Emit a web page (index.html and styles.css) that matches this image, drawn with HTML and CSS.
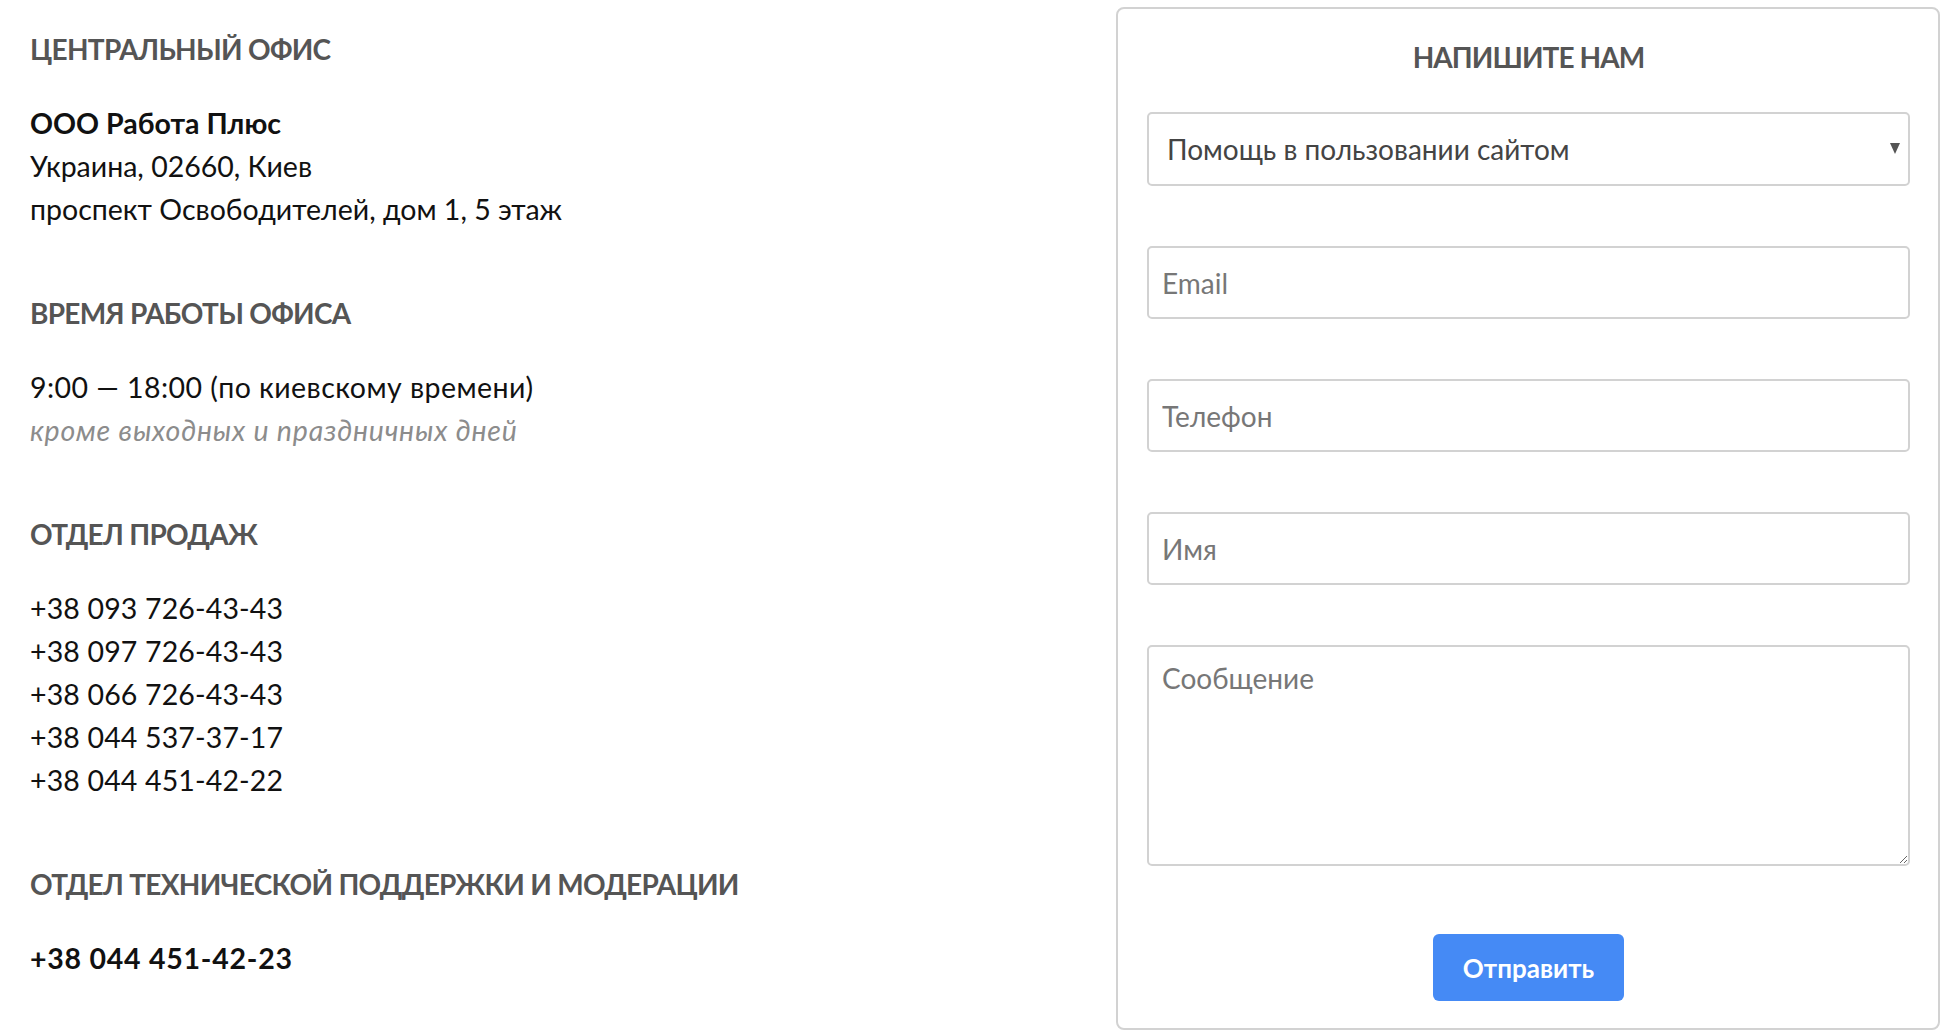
FILE: index.html
```html
<!DOCTYPE html>
<html lang="ru">
  <head>
    <meta charset="utf-8">
    <meta name="viewport" content="width=device-width, initial-scale=1.0">
    <title>Контакты</title>
    <link rel="stylesheet" href="styles.css">
  </head>
  <body>
    <div class="contacts-page">
      <div class="contacts-info">
        <div class="info-block">
          <h3 class="info-title">ЦЕНТРАЛЬНЫЙ ОФИС</h3>
          <p class="info-text">
            <b>ООО Работа Плюс</b><br/>
            Украина, 02660, Киев<br/>
            проспект Освободителей, дом 1, 5 этаж
          </p>
        </div>
        <div class="info-block">
          <h3 class="info-title">ВРЕМЯ РАБОТЫ ОФИСА</h3>
          <p class="info-text">
            <span class="work-hours">9:00 &mdash; 18:00 (по киевскому времени)</span><br/>
            <span class="info-note">кроме выходных и праздничных дней</span>
          </p>
        </div>
        <div class="info-block">
          <h3 class="info-title">ОТДЕЛ ПРОДАЖ</h3>
          <p class="info-text phones">
            +38 093 726-43-43<br/>
            +38 097 726-43-43<br/>
            +38 066 726-43-43<br/>
            +38 044 537-37-17<br/>
            +38 044 451-42-22
          </p>
        </div>
        <div class="info-block">
          <h3 class="info-title">ОТДЕЛ ТЕХНИЧЕСКОЙ ПОДДЕРЖКИ И МОДЕРАЦИИ</h3>
          <p class="info-text"><b class="support-phone">+38 044 451-42-23</b></p>
        </div>
      </div>

      <form class="feedback-form" onsubmit="return false;">
        <h3 class="form-title">НАПИШИТЕ НАМ</h3>
        <div class="select-wrap">
          <select class="form-select" name="topic">
            <option>Помощь в пользовании сайтом</option>
            <option>Реклама и сотрудничество</option>
            <option>Другое</option>
          </select>
          <svg class="select-arrow" width="10" height="11" viewBox="0 0 10 11"><polygon points="0,0 10,0 5,11" fill="#555"/></svg>
        </div>
        <input class="form-input" type="email" name="email" placeholder="Email">
        <input class="form-input" type="tel" name="phone" placeholder="Телефон">
        <input class="form-input" type="text" name="name" placeholder="Имя">
        <textarea class="form-textarea" name="message" placeholder="Сообщение"></textarea>
        <div class="submit-row">
          <button type="submit" class="submit-button">Отправить</button>
        </div>
      </form>
    </div>
  </body>
</html>
```

FILE: styles.css
```css
body {
  margin: 0;
  font-family: Lato, "Open Sans", "Noto Sans", sans-serif;
  color: #111;
  background: #fff;
}
.contacts-page {
  display: flex;
  align-items: flex-start;
  padding: 0 8px 0 30px;
}
.contacts-info {
  flex: 1;
  padding-top: 28px;
}
.info-block {
  margin-bottom: 61px;
}
.info-title {
  margin: 0 0 31px;
  font-size: 28px;
  line-height: 43px;
  letter-spacing: -0.7px;
  font-weight: bold;
  color: #555;
}
.info-text {
  margin: 0;
  font-size: 28.5px;
  line-height: 43px;
}
.work-hours {
  letter-spacing: 0.45px;
}
.info-note {
  font-style: italic;
  letter-spacing: 0.8px;
  color: #8c8c8c;
}
.phones {
  letter-spacing: 0.15px;
}
.support-phone {
  letter-spacing: 0.75px;
}
.feedback-form {
  width: 824px;
  box-sizing: border-box;
  margin-top: 7px;
  padding: 27px 28px 27px 29px;
  border: 2px solid #d2d2d2;
  border-radius: 8px;
}
.form-title {
  margin: 0 0 33px;
  text-align: center;
  font-size: 28px;
  line-height: 43px;
  letter-spacing: -0.9px;
  font-weight: bold;
  color: #555;
}
.select-wrap {
  position: relative;
  margin-bottom: 60px;
}
.form-select, .form-input, .form-textarea {
  display: block;
  width: 100%;
  box-sizing: border-box;
  border: 2px solid #d2d2d2;
  border-radius: 5px;
  background: #fff;
  font-family: inherit;
  font-size: 28px;
  color: #444;
  outline: none;
}
.form-select {
  height: 74px;
  padding: 0 40px 0 18px;
  appearance: none;
  -webkit-appearance: none;
}
.select-arrow {
  position: absolute;
  right: 10px;
  top: 31px;
  pointer-events: none;
}
.form-input {
  height: 73px;
  margin-bottom: 60px;
  padding: 0 13px;
}
.form-textarea {
  height: 221px;
  padding: 10px 13px;
  line-height: 43px;
}
.form-input::placeholder, .form-textarea::placeholder {
  color: #777;
}
.submit-row {
  display: flex;
  justify-content: center;
  margin-top: 68px;
}
.submit-button {
  width: 191px;
  height: 67px;
  border: none;
  border-radius: 6px;
  background-color: #458af5;
  color: #fff;
  font-family: inherit;
  font-size: 26px;
  font-weight: bold;
  cursor: pointer;
}
```
